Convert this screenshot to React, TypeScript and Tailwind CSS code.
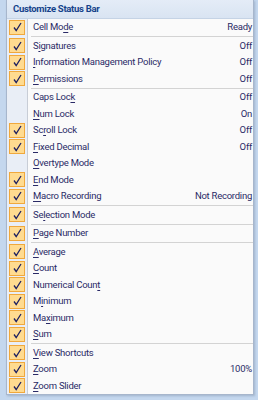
import React from 'react';

interface Item {
  label: string;
  key: number;
  checked: boolean;
  value?: string;
  sep?: boolean;
}

const items: Item[] = [
  { label: 'Cell Mode', key: 7, checked: true, value: 'Ready', sep: true },
  { label: 'Signatures', key: 1, checked: true, value: 'Off' },
  { label: 'Information Management Policy', key: 0, checked: true, value: 'Off' },
  { label: 'Permissions', key: 0, checked: true, value: 'Off', sep: true },
  { label: 'Caps Lock', key: 8, checked: false, value: 'Off' },
  { label: 'Num Lock', key: 0, checked: false, value: 'On' },
  { label: 'Scroll Lock', key: 2, checked: true, value: 'Off' },
  { label: 'Fixed Decimal', key: 0, checked: true, value: 'Off' },
  { label: 'Overtype Mode', key: 0, checked: false },
  { label: 'End Mode', key: 0, checked: true },
  { label: 'Macro Recording', key: 0, checked: true, value: 'Not Recording', sep: true },
  { label: 'Selection Mode', key: 2, checked: true, sep: true },
  { label: 'Page Number', key: 0, checked: true, sep: true },
  { label: 'Average', key: 0, checked: true },
  { label: 'Count', key: 0, checked: true },
  { label: 'Numerical Count', key: 14, checked: true },
  { label: 'Minimum', key: 1, checked: true },
  { label: 'Maximum', key: 2, checked: true },
  { label: 'Sum', key: 0, checked: true, sep: true },
  { label: 'View Shortcuts', key: 0, checked: true },
  { label: 'Zoom', key: 0, checked: true, value: '100%' },
  { label: 'Zoom Slider', key: 0, checked: true },
];

const Label: React.FC<{ text: string; k: number }> = ({ text, k }) => (
  <span>
    {text.slice(0, k)}
    <span className="underline underline-offset-[2px]">{text[k]}</span>
    {text.slice(k + 1)}
  </span>
);

// thin check glyph like the Office 2007 menu mark
const Check = () => (
  <svg width="9" height="10" viewBox="0 0 9 10">
    <path d="M1 5.5 L3.2 8.5 L8 1" fill="none" stroke="#1f2160" strokeWidth="1.3" />
  </svg>
);

export default function App() {
  return (
    <div
      className="w-[258px] h-[400px] bg-[#c4d7ee] pl-[6px] pr-[4px] overflow-hidden"
      style={{ fontFamily: 'Roboto, "Open Sans", sans-serif' }}
    >
      <div className="h-[395px] bg-[#fafafa] border-l border-r border-b border-[#a7b6cc] shadow-[1px_1px_2px_rgba(80,100,130,0.3)] flex flex-col">
        {/* title */}
        <div className="h-[21px] flex items-center pl-[6px] bg-gradient-to-b from-[#e4ecf7] to-[#d9e4f2] border-b border-[#c5d3e5] text-[9.5px] font-bold text-[#15428b] tracking-[-0.3px]">
          Customize Status Bar
        </div>
        <div className="flex-1 relative">
          {/* gutter */}
          <div className="absolute left-0 top-0 bottom-0 w-[21px] bg-[#e9eef6] border-r border-[#c8cdd6]" />
          <div className="relative flex flex-col">
            {items.map((it, i) => (
              <React.Fragment key={i}>
                <div className="h-[16.5px] flex items-center text-[9.5px] text-[#2a2a66] tracking-[-0.25px]">
                  <div className="w-[20px] shrink-0 flex justify-center">
                    {it.checked && (
                      <div className="w-[16px] h-[15px] bg-[#ffdb90] border border-[#f0a83c] flex items-center justify-center">
                        <Check />
                      </div>
                    )}
                  </div>
                  <div className="pl-[6px] flex-1 whitespace-nowrap">
                    <Label text={it.label} k={it.key} />
                  </div>
                  {it.value && <div className="pr-[1px] whitespace-nowrap">{it.value}</div>}
                </div>
                {it.sep && (
                  <div className="h-[2px] flex items-center pl-[24px]">
                    <div className="flex-1 h-px bg-[#d3d3d3]" />
                  </div>
                )}
              </React.Fragment>
            ))}
          </div>
        </div>
      </div>
    </div>
  );
}
